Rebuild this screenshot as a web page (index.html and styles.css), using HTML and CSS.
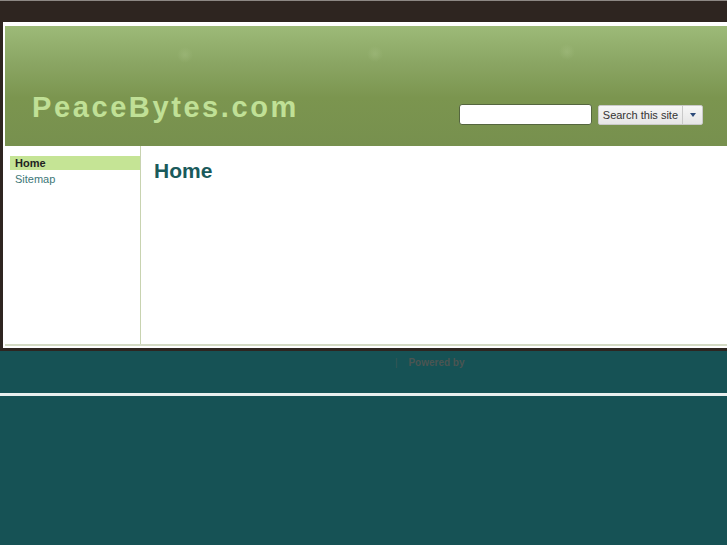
FILE: index.html
```html
<!DOCTYPE html>
<html lang="en">
<head>
  <meta charset="UTF-8" />
  <title>PeaceBytes.com - Home</title>
  <link rel="stylesheet" href="styles.css">
</head>
<body>
  <div class="wrap">
    <div class="page">
      <!-- Header with site title and search -->
      <div class="header">
        <div class="site-title">PeaceBytes.com</div>
        <form class="search" onsubmit="return false;">
          <input type="text" class="search-box" />
          <div class="search-btn">
            <span class="search-label">Search this site</span>
            <span class="search-drop"><span class="arrow"></span></span>
          </div>
        </form>
      </div>
      <div class="main">
        <div class="sidebar">
          <a class="nav-item active" href="#">Home</a>
          <a class="nav-item" href="#">Sitemap</a>
        </div>
        <div class="content">
          <h1>Home</h1>
        </div>
      </div>
    </div>
  </div>
  <div class="footer">
    <span class="sep">|</span>
    <span class="powered">Powered by</span>
  </div>
  <div class="footer-line"></div>
</body>
</html>
```

FILE: styles.css
```css
body { margin: 0; background: #165255; font-family: 'Liberation Sans', Arial, sans-serif; }
.wrap { background: #2e2520; border-top: 1px solid #8d8884; padding: 21px 0 3px 3px; }
.page { background: #fff; padding: 4px 0 2px 2px; }
/* Header */
.header { height: 120px; display: flex; justify-content: space-between; align-items: flex-end;
  background:
    radial-gradient(circle at 180px 29px, rgba(200,220,170,0.18) 0, rgba(200,220,170,0) 8px),
    radial-gradient(circle at 370px 28px, rgba(200,220,170,0.18) 0, rgba(200,220,170,0) 8px),
    radial-gradient(circle at 562px 26px, rgba(200,220,170,0.18) 0, rgba(200,220,170,0) 8px),
    linear-gradient(#9dba78 0, #8aa563 38px, #7b954f 72px, #77904e 120px); }
.site-title { margin: 0 0 23px 27px; color: #c0e096; font-size: 29px; line-height: 32px; font-weight: bold; letter-spacing: 2.6px; }
.search { display: flex; align-items: center; margin: 0 24px 21px 0; }
.search-box { width: 133px; height: 21px; box-sizing: border-box; border: 1px solid #55663f; border-radius: 3px; background: #fff; margin: 0 6px 0 0; padding: 0 3px; }
.search-btn { display: flex; height: 20px; box-sizing: border-box; border: 1px solid #c9c9c9; border-radius: 2px; background: linear-gradient(#f6f6f6, #e6e6e6); font-size: 11px; color: #333; }
.search-label { padding: 0 4px 0 4px; line-height: 18px; border-right: 1px solid #c9c9c9; }
.search-drop { width: 19px; display: flex; align-items: center; justify-content: center; }
.arrow { width: 0; height: 0; border-left: 3px solid transparent; border-right: 3px solid transparent; border-top: 4px solid #2c4a7a; }
/* Main area */
.main { display: flex; min-height: 198px; border-bottom: 2px solid #d3dac4; }
.sidebar { width: 130px; padding: 10px 0 0 5px; border-right: 1px solid #c8d3b0; }
.nav-item { display: block; font-size: 11px; line-height: 14px; padding: 0 5px; color: #3d7878; text-decoration: none; }
.nav-item.active { background: #c5e495; color: #222; font-weight: bold; }
.nav-item + .nav-item { line-height: 16px; padding-top: 1px; }
.content { flex: 1; padding: 13px 13px; }
.content h1 { margin: 0; font-size: 21px; line-height: 24px; color: #1a5a5b; }
/* Footer */
.footer { height: 42px; box-sizing: border-box; padding: 6px 0 0 395px; font-size: 10px; line-height: 12px; }
.sep { color: #3a5856; margin-right: 8px; }
.powered { color: #4b5552; font-weight: bold; }
.footer-line { height: 3px; background: #e8efee; }
```
